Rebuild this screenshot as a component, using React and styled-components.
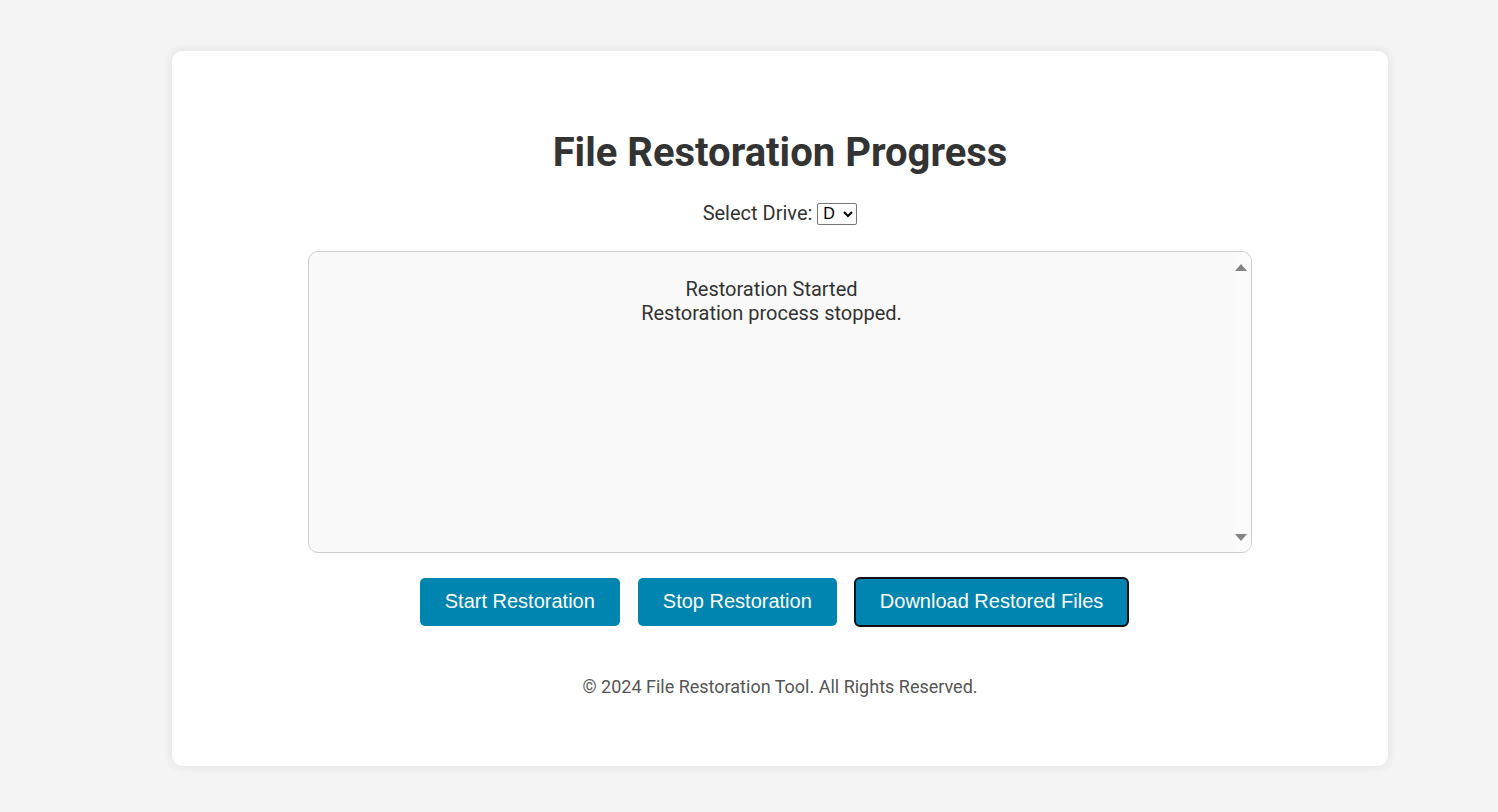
import React from "react";
import styled, { createGlobalStyle } from "styled-components";

const Global = createGlobalStyle`
  html, body { margin: 0; padding: 0; background: #f4f4f4; }
  body { font-family: Roboto, "Liberation Sans", sans-serif; color: #333; }
`;

const Page = styled.div`
  padding: 51px 0 46px 172px;
`;

const Card = styled.div`
  width: 1216px;
  box-sizing: border-box;
  background: #fff;
  border-radius: 10px;
  box-shadow: 0 0 10px rgba(0, 0, 0, 0.1);
  padding: 78px 0 69px;
  display: flex;
  flex-direction: column;
  align-items: center;
`;

const Title = styled.h1`
  margin: 0;
  font-family: Roboto, sans-serif;
  font-weight: 700;
  font-size: 40px;
  line-height: 47px;
  color: #333;
`;

const DriveRow = styled.div`
  margin-top: 26px;
  display: flex;
  align-items: center;
  gap: 5px;
  font-size: 20px;
  line-height: 23px;
  color: #333;
`;

const Select = styled.select`
  font-family: "Liberation Sans", Arial, sans-serif;
  font-size: 16px;
  width: 40px;
  height: 22px;
  padding: 0 1px;
  border: 1px solid #767676;
  border-radius: 2px;
  background: #fff;
  color: #000;
`;

const Log = styled.div`
  margin-top: 26px;
  width: 944px;
  height: 302px;
  box-sizing: border-box;
  border: 1px solid #ccc;
  border-radius: 10px;
  background: #f9f9f9;
  overflow: hidden;
  display: flex;
`;

const LogContent = styled.div`
  flex: 1;
  padding: 25px 0;
  text-align: center;
  font-size: 20px;
  line-height: 24px;
  color: #333;
`;

const Rail = styled.div`
  width: 17px;
  box-sizing: border-box;
  background: #fafafa;
  display: flex;
  flex-direction: column;
  justify-content: space-between;
  align-items: center;
  padding: 12px 3px 11px 0;
`;

const Arrow = styled.span`
  width: 0;
  height: 0;
  border-left: 6px solid transparent;
  border-right: 6px solid transparent;
  ${(p) =>
    p.$down
      ? "border-top: 7px solid #848484;"
      : "border-bottom: 7px solid #848484;"}
`;

const Buttons = styled.div`
  margin-top: 25px;
  display: flex;
  gap: 18px;
  padding-right: 12px;
`;

const Button = styled.button`
  font-family: "Liberation Sans", Arial, sans-serif;
  font-size: 20px;
  line-height: 23px;
  padding: 12px 25px 13px;
  color: #fff;
  background: #0084b0;
  border: none;
  border-radius: 5px;
  cursor: pointer;
  outline: ${(p) => (p.$focused ? "2px solid #111" : "none")};
  outline-offset: -1px;
`;

const Footer = styled.p`
  margin: 50px 0 0;
  font-size: 18px;
  line-height: 21px;
  color: #555;
`;

export default function App() {
  return (
    <>
      <Global />
      <Page>
        <Card>
          <Title>File Restoration Progress</Title>
          <DriveRow>
            <span>Select Drive:</span>
            <Select defaultValue="D">
              <option value="C">C</option>
              <option value="D">D</option>
              <option value="E">E</option>
            </Select>
          </DriveRow>
          <Log>
            <LogContent>
              <div>Restoration Started</div>
              <div>Restoration process stopped.</div>
            </LogContent>
            <Rail>
              <Arrow />
              <Arrow $down />
            </Rail>
          </Log>
          <Buttons>
            <Button>Start Restoration</Button>
            <Button>Stop Restoration</Button>
            <Button $focused>Download Restored Files</Button>
          </Buttons>
          <Footer>© 2024 File Restoration Tool. All Rights Reserved.</Footer>
        </Card>
      </Page>
    </>
  );
}
